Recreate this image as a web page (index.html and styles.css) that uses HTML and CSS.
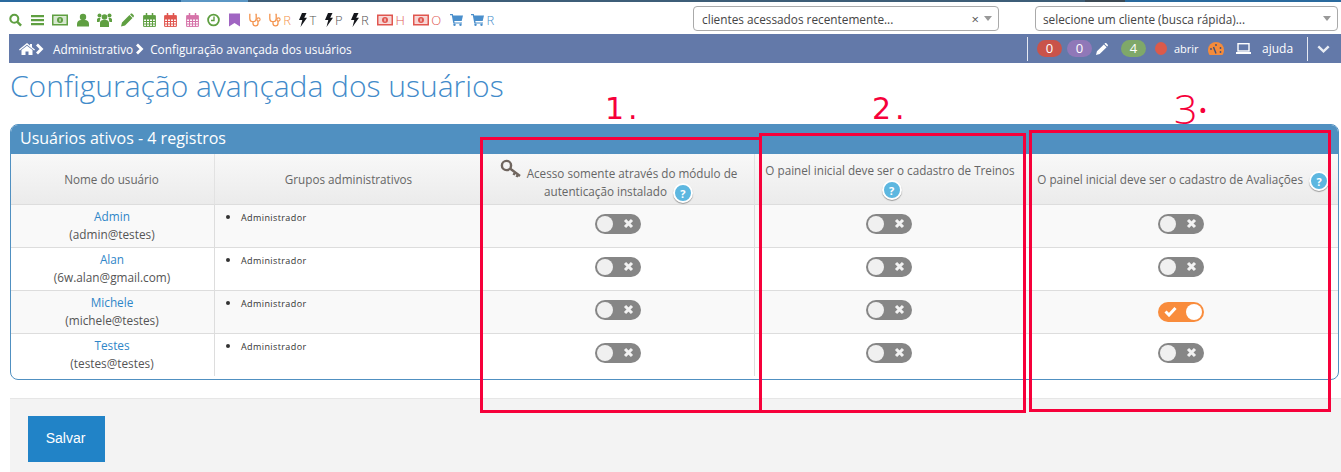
FILE: index.html
```html
<!DOCTYPE html>
<html lang="pt">
<head>
<meta charset="utf-8">
<title>Configuração avançada dos usuários</title>
<link rel="stylesheet" href="styles.css">
</head>
<body>
<svg class="defs" width="0" height="0" aria-hidden="true">
  <symbol id="i-search" viewBox="0 0 14 14"><circle cx="5.7" cy="5.7" r="4.3" fill="none" stroke="currentColor" stroke-width="2.2"/><path d="M9 9l4 4" stroke="currentColor" stroke-width="2.6"/></symbol>
  <symbol id="i-bars" viewBox="0 0 13 12"><path d="M0 1h13v2.200H0zM0 5h13v2.200H0zM0 9h13v2.200H0z" fill="currentColor"/></symbol>
  <symbol id="i-money" viewBox="0 0 16 11"><rect x=".8" y=".8" width="14.400" height="9.400" fill="none" stroke="currentColor" stroke-width="1.600"/><rect x="2" y="2" width="12" height="7" fill="currentColor" opacity=".25"/><circle cx="8" cy="5.500" r="3" fill="currentColor"/><path d="M8 4v3" stroke="#fff" stroke-width="1"/></symbol>
  <symbol id="i-user" viewBox="0 0 12 13"><circle cx="6" cy="3.500" r="3.200" fill="currentColor"/><path d="M0 13v-2.500C0 8 2 6.500 4 6.500h4c2 0 4 1.500 4 4V13z" fill="currentColor"/></symbol>
  <symbol id="i-users" viewBox="0 0 15 14"><circle cx="7.500" cy="4" r="2.800" fill="currentColor"/><circle cx="2.500" cy="2.500" r="2" fill="currentColor"/><circle cx="12.500" cy="2.500" r="2" fill="currentColor"/><path d="M3 14v-4c0-2 1.500-3 3-3h3c1.500 0 3 1 3 3v4z" fill="currentColor"/><path d="M0 9V6.500C0 5.500 1 5 2 5h1.500L2.500 9zM15 9V6.500C15 5.500 14 5 13 5h-1.500l1 4z" fill="currentColor"/></symbol>
  <symbol id="i-pencil" viewBox="0 0 13 13"><path d="M0 13l1-4 7.500-7.500 3 3L4 12zM9.500.5c.6-.6 1.400-.6 2 0l1 1c.6.600.6 1.400 0 2l-.4.400-3-3z" fill="currentColor"/></symbol>
  <symbol id="i-cal" viewBox="0 0 13 14"><path d="M.6 2.600h11.800v10.800H.6zM.6 6h11.800M.6 8.500h11.800M.6 11h11.800M3.500 6v7.400M6.500 6v7.400M9.500 6v7.400" fill="none" stroke="currentColor" stroke-width="1"/><rect x="1" y="3" width="11" height="3" fill="currentColor"/><path d="M3.500 0v3.500M9.500 0v3.500" stroke="currentColor" stroke-width="1.500"/></symbol>
  <symbol id="i-clock" viewBox="0 0 13 13"><circle cx="6.500" cy="6.500" r="5.400" fill="none" stroke="currentColor" stroke-width="1.800"/><path d="M7 3v4H4" fill="none" stroke="currentColor" stroke-width="1.400"/></symbol>
  <symbol id="i-bookmark" viewBox="0 0 11 13"><path d="M0 0h11v13L5.500 9.500 0 13z" fill="currentColor"/></symbol>
  <symbol id="i-steth" viewBox="0 0 12 13"><path d="M1.500 1H.8v4c0 2 1.500 3.200 3.200 3.200S7.200 7 7.200 5V1h-.8M4 8.200V10c0 1.500 1 2.300 2.500 2.300S9 11.500 9 10V7.500" fill="none" stroke="currentColor" stroke-width="1.300"/><circle cx="9.500" cy="6" r="1.600" fill="none" stroke="currentColor" stroke-width="1.100"/></symbol>
  <symbol id="i-bolt" viewBox="0 0 8 14"><path d="M3 0h4.500L5.200 4.800H8L1.500 14l1.800-7H0z" fill="currentColor"/></symbol>
  <symbol id="i-cart" viewBox="0 0 13 12"><path d="M0 0h2.800l.4 1.500H13l-1.300 5.500H4.300l.3 1.400h7.400v1.200H3.300L1.800 1.300H0z" fill="currentColor"/><circle cx="4.500" cy="10.800" r="1.200" fill="currentColor"/><circle cx="10.500" cy="10.800" r="1.200" fill="currentColor"/></symbol>
  <symbol id="i-home" viewBox="0 0 16 12"><path d="M8 0l3 2.500V1h2v3.200L16 6.500l-.8.900L8 1.700.8 7.400 0 6.500z" fill="currentColor"/><path d="M2.500 7L8 2.800 13.500 7v5H9.500V8.500h-3V12h-4z" fill="currentColor"/></symbol>
  <symbol id="i-chev" viewBox="0 0 8 12"><path d="M1 1.500l4.500 4.500L1 10.500" fill="none" stroke="currentColor" stroke-width="2.800"/></symbol>
  <symbol id="i-down" viewBox="0 0 13 8"><path d="M1.300 1.300l5.200 5 5.200-5" fill="none" stroke="currentColor" stroke-width="2.400"/></symbol>
  <symbol id="i-laptop" viewBox="0 0 15 11"><rect x="2" y=".7" width="11" height="7.300" fill="none" stroke="currentColor" stroke-width="1.400"/><rect x="0" y="9" width="15" height="2" fill="currentColor"/></symbol>
  <symbol id="i-gauge" viewBox="0 0 16 13"><path d="M8 0a8 8 0 0 1 8 8c0 2-.6 3.600-1.600 5H1.600C.6 11.600 0 10 0 8a8 8 0 0 1 8-8z" fill="#f58b3a"/><path d="M8 11.500L5.500 5" stroke="#40507a" stroke-width="1.400"/><circle cx="3" cy="7" r=".9" fill="#40507a"/><circle cx="8" cy="3" r=".9" fill="#40507a"/><circle cx="12.500" cy="6" r=".9" fill="#40507a"/><circle cx="12.500" cy="10" r=".9" fill="#40507a"/></symbol>
  <symbol id="i-key" viewBox="0 0 22 20"><circle cx="6.500" cy="6.500" r="4.600" fill="none" stroke="currentColor" stroke-width="2.400"/><path d="M10 9.500l10 7.500M15 13.500l-1.500 2.500M18 15.500l-1.500 2.500" fill="none" stroke="currentColor" stroke-width="2.400"/></symbol>
  <symbol id="i-x" viewBox="0 0 12 12"><path d="M2.200 2.200l7.600 7.600M9.800 2.200l-7.600 7.600" stroke="currentColor" stroke-width="3.400"/></symbol>
  <symbol id="i-check" viewBox="0 0 13 11"><path d="M1.500 5.500l3.500 3.500 6.500-7" fill="none" stroke="currentColor" stroke-width="3"/></symbol>
</svg>

<div class="topline"><span class="seg seg-a"></span><span class="seg seg-b"></span><span class="seg seg-c"></span><span class="seg seg-d"></span></div>

<header class="toolbar">
  <nav class="quick">
    <svg class="ic w13 green"><use href="#i-search"/></svg>
    <svg class="ic w13 green"><use href="#i-bars"/></svg>
    <svg class="ic w16 green"><use href="#i-money"/></svg>
    <svg class="ic w12 green"><use href="#i-user"/></svg>
    <svg class="ic w15 green"><use href="#i-users"/></svg>
    <svg class="ic w13 green"><use href="#i-pencil"/></svg>
    <svg class="ic w13 green"><use href="#i-cal"/></svg>
    <svg class="ic w13 red"><use href="#i-cal"/></svg>
    <svg class="ic w13 pink"><use href="#i-cal"/></svg>
    <svg class="ic w13 green"><use href="#i-clock"/></svg>
    <svg class="ic w11 purple"><use href="#i-bookmark"/></svg>
    <svg class="ic w12 orange"><use href="#i-steth"/></svg>
    <span class="qi orange"><svg class="ic w12"><use href="#i-steth"/></svg>R</span>
    <span class="qi grey"><svg class="ic w8 black"><use href="#i-bolt"/></svg>T</span>
    <span class="qi grey"><svg class="ic w8 black"><use href="#i-bolt"/></svg>P</span>
    <span class="qi grey"><svg class="ic w8 black"><use href="#i-bolt"/></svg>R</span>
    <span class="qi red"><svg class="ic w16"><use href="#i-money"/></svg>H</span>
    <span class="qi red"><svg class="ic w16"><use href="#i-money"/></svg>O</span>
    <svg class="ic w13 blue"><use href="#i-cart"/></svg>
    <span class="qi blue"><svg class="ic w13"><use href="#i-cart"/></svg>R</span>
  </nav>
  <div class="selects">
    <div class="sel sel-a"><span class="sel-text">clientes acessados recentemente...</span><span class="sel-x">×</span><span class="caret"></span></div>
    <div class="sel sel-b"><span class="sel-text">selecione um cliente (busca rápida)...</span><span class="caret"></span></div>
  </div>
</header>

<div class="crumbbar">
  <div class="crumbs">
    <svg class="home"><use href="#i-home"/></svg>
    <svg class="chev"><use href="#i-chev"/></svg>
    <span class="crumb crumb-first">Administrativo</span>
    <svg class="chev"><use href="#i-chev"/></svg>
    <span class="crumb">Configuração avançada dos usuários</span>
  </div>
  <div class="status">
    <span class="vbar"></span>
    <span class="badge b-red">0</span>
    <span class="badge b-purple">0</span>
    <svg class="st-pencil"><use href="#i-pencil"/></svg>
    <span class="badge b-green">4</span>
    <span class="dot"></span>
    <span class="st-text st-abrir">abrir</span>
    <svg class="st-gauge"><use href="#i-gauge"/></svg>
    <svg class="st-laptop"><use href="#i-laptop"/></svg>
    <span class="st-text st-ajuda">ajuda</span>
    <span class="vbar vbar-b"></span>
    <svg class="st-down"><use href="#i-down"/></svg>
  </div>
</div>

<main>
  <h1 class="title">Configuração avançada dos usuários</h1>
  <section class="panel">
    <h2 class="panel-head">Usuários ativos - 4 registros</h2>
    <div class="panel-body">
      <table class="grid">
        <colgroup><col class="c1"><col class="c2"><col class="c3"><col class="c4"><col class="c5"></colgroup>
        <thead>
          <tr>
            <th class="th-name">Nome do usuário</th>
            <th>Grupos administrativos</th>
            <th class="th-key"><svg class="key"><use href="#i-key"/></svg>Acesso somente através do módulo de autenticação instalado <span class="help">?</span></th>
            <th class="th-two">O painel inicial deve ser o cadastro de Treinos <span class="help">?</span></th>
            <th class="th-three">O painel inicial deve ser o cadastro de Avaliações <span class="help">?</span></th>
          </tr>
        </thead>
        <tbody>
          <tr>
            <td class="who"><a href="#">Admin</a><br>(admin@testes)</td>
            <td class="grp"><ul><li>Administrador</li></ul></td>
            <td class="sw"><span class="toggle"><span class="knob"></span><svg class="tx"><use href="#i-x"/></svg></span></td>
            <td class="sw"><span class="toggle"><span class="knob"></span><svg class="tx"><use href="#i-x"/></svg></span></td>
            <td class="sw"><span class="toggle"><span class="knob"></span><svg class="tx"><use href="#i-x"/></svg></span></td>
          </tr>
          <tr>
            <td class="who"><a href="#">Alan</a><br>(6w.alan@gmail.com)</td>
            <td class="grp"><ul><li>Administrador</li></ul></td>
            <td class="sw"><span class="toggle"><span class="knob"></span><svg class="tx"><use href="#i-x"/></svg></span></td>
            <td class="sw"><span class="toggle"><span class="knob"></span><svg class="tx"><use href="#i-x"/></svg></span></td>
            <td class="sw"><span class="toggle"><span class="knob"></span><svg class="tx"><use href="#i-x"/></svg></span></td>
          </tr>
          <tr>
            <td class="who"><a href="#">Michele</a><br>(michele@testes)</td>
            <td class="grp"><ul><li>Administrador</li></ul></td>
            <td class="sw"><span class="toggle"><span class="knob"></span><svg class="tx"><use href="#i-x"/></svg></span></td>
            <td class="sw"><span class="toggle"><span class="knob"></span><svg class="tx"><use href="#i-x"/></svg></span></td>
            <td class="sw"><span class="toggle on"><svg class="tc"><use href="#i-check"/></svg><span class="knob"></span></span></td>
          </tr>
          <tr>
            <td class="who"><a href="#">Testes</a><br>(testes@testes)</td>
            <td class="grp"><ul><li>Administrador</li></ul></td>
            <td class="sw"><span class="toggle"><span class="knob"></span><svg class="tx"><use href="#i-x"/></svg></span></td>
            <td class="sw"><span class="toggle"><span class="knob"></span><svg class="tx"><use href="#i-x"/></svg></span></td>
            <td class="sw"><span class="toggle"><span class="knob"></span><svg class="tx"><use href="#i-x"/></svg></span></td>
          </tr>
        </tbody>
      </table>
    </div>
  </section>
  <footer class="actions"><button class="save" type="button">Salvar</button></footer>
</main>

<div class="mark box1"></div>
<div class="mark box2"></div>
<div class="mark box3"></div>
<span class="num num1">1.</span>
<span class="num num2">2.</span>
<span class="num num3">3<span class="num-dot">·</span></span>
</body>
</html>
```
FILE: styles.css
```css
* { box-sizing: border-box; }
html, body { margin: 0; padding: 0; }
body { width: 1341px; height: 472px; overflow: hidden; position: relative; background: #fff; font-family: "Open Sans", sans-serif; color: #555; }
.defs { position: absolute; }

.topline { display: flex; height: 2px; background: #2a6a9e; }
.seg { display: block; height: 2px; }
.seg-a { width: 181px; }
.seg-b { width: 67px; background: #5a96c4; }
.seg-c { width: 837px; background: #3e5e78; }
.seg-d { width: 40px; background: #3c4a55; }

.toolbar { height: 32px; display: flex; justify-content: space-between; }
.quick { display: flex; align-items: center; gap: 8.600px; padding: 3px 0 0 9px; height: 32px; }
.ic { display: block; height: 14px; flex: none; }
.w8 { width: 8px; } .w11 { width: 11px; } .w12 { width: 12px; } .w13 { width: 13px; } .w15 { width: 15px; } .w16 { width: 16px; }
.qi { display: flex; align-items: center; gap: 2px; font-size: 13px; line-height: 14px; font-weight: 300; }
.green { color: #5f9f41; } .red { color: #e0564f; } .pink { color: #d673a9; } .purple { color: #a065c2; }
.orange { color: #f49550; } .blue { color: #4a8fcc; } .black { color: #15171c; } .grey { color: #555; }

.selects { display: flex; gap: 36px; padding: 4px 3px 0 0; }
.sel { height: 25px; border: 1px solid #aaa; border-radius: 4px; background: #fff; display: flex; align-items: center; padding: 0 5px 0 8px; font-size: 11.800px; color: #444; }
.sel-a { width: 306px; }
.sel-b { width: 303px; padding-left: 7px; }
.sel-text { flex: 1; }
.sel-x { font-size: 13px; margin-right: 5px; color: #555; }
.caret { width: 0; height: 0; border: 4px solid transparent; border-top: 5px solid #999; border-bottom: 0; margin-right: 1px; }

.crumbbar { margin-left: 9px; height: 29px; background: #6379a9; color: #fff; display: flex; justify-content: space-between; align-items: center; }
.crumbs { display: flex; align-items: center; padding-left: 10px; font-size: 11.800px; }
.home { width: 16px; height: 12px; color: #fff; }
.chev { width: 8px; height: 12px; color: #fff; margin-left: 1px; }
.crumb { white-space: nowrap; margin-left: 6px; }
.crumb-first { margin-left: 9px; margin-right: 2px; }
.status { display: flex; align-items: center; width: 314px; height: 29px; font-size: 11px; }
.vbar { width: 1px; height: 24px; background: #e6e9f2; margin-right: 9px; flex: none; }
.vbar-b { margin: 0 9px 0 13px; }
.badge { width: 25px; height: 17px; border-radius: 9px; text-align: center; font-size: 13px; line-height: 17px; flex: none; }
.b-red { background: #c9534a; }
.b-purple { background: #9078b8; margin-left: 5px; }
.b-green { background: #7fa869; margin-left: 13px; }
.st-pencil { width: 12px; height: 12px; margin-left: 4px; color: #fff; }
.dot { width: 12px; height: 13px; border-radius: 50%; background: #dc5a4a; margin-left: 9px; flex: none; }
.st-text { white-space: nowrap; }
.st-abrir { margin-left: 7px; width: 24px; }
.st-gauge { width: 16px; height: 13px; margin-left: 10px; }
.st-laptop { width: 15px; height: 11px; margin-left: 12px; color: #fff; }
.st-ajuda { margin-left: 11px; width: 32px; font-size: 12px; }
.st-down { width: 13px; height: 8px; color: #e8ecf4; }

.title { margin: 0; padding: 6px 0 0 10px; height: 61px; font-size: 30px; line-height: 34px; font-weight: 300; color: #428bca; white-space: nowrap; }

.panel { margin: 0 2px 0 10px; border: 1px solid #5090c1; border-radius: 8px; height: 256px; overflow: hidden; }
.panel-head { margin: -1px -1px 0; height: 30px; padding: 0 10px; background: #5090c1; color: #fff; font-size: 16px; font-weight: 400; line-height: 29px; }
.grid { width: 1327px; table-layout: fixed; border-collapse: separate; border-spacing: 0; }
.c1 { width: 204px; } .c2 { width: 268px; } .c3 { width: 272px; } .c4 { width: 271px; } .c5 { width: 312px; }
th { height: 51px; padding: 0 5px; font-size: 11.700px; line-height: 18px; font-weight: 400; color: #666; text-align: center; background: linear-gradient(#f8f8f8, #ebebeb); border-bottom: 1px solid #ddd; border-right: 1px solid #e2e2e2; }
th:last-child, td:last-child { border-right: 0; }
td { height: 43px; border-bottom: 1px solid #ddd; border-right: 1px solid #ddd; vertical-align: top; }
tbody tr:nth-child(odd) td { background: #f9f9f9; }
tbody tr:last-child td { border-bottom: 0; height: 42px; }
.who { text-align: center; font-size: 11.800px; line-height: 18px; padding: 2px 1px 0 0; color: #555; }
.who a { color: #2f86c8; text-decoration: none; }
.grp { font-size: 9px; letter-spacing: .4px; color: #333; padding: 0; }
.grp ul { margin: 3px 0 0; padding-left: 26px; }
.grp li::marker { font-size: 12px; }
.sw { text-align: center; padding: 9px 2px 0 0; }
.th-name { padding: 0 7px 0 5px; }
.th-key { padding: 0 8px 4px; vertical-align: bottom; }
.th-two { padding: 0 5px; }
.th-three { padding: 0 9px 0 0; text-align: right; white-space: nowrap; }
.key { width: 22px; height: 20px; margin: -6px 5px 0 0; color: #70665f; vertical-align: -1px; }
.help { display: inline-block; width: 20px; height: 20px; margin: -4px 0 -4px 3px; border-radius: 50%; background: #5db7e0; color: #fff; font-weight: 700; font-size: 11px; line-height: 17px; border: 2px solid #fff; box-shadow: 0 1px 1px #999; text-align: center; vertical-align: middle; }
.toggle { display: inline-flex; align-items: center; justify-content: space-between; width: 46px; height: 20px; border-radius: 10px; background: #868686; padding: 0 6px 0 2px; }
.toggle.on { background: #f98c3c; padding: 0 2px 0 6px; }
.knob { width: 16px; height: 16px; border-radius: 50%; background: #f0f0f0; }
.on .knob { background: #fff; }
.tx { width: 11px; height: 11px; color: #f2f2f2; margin-right: 1px; margin-top: -1px; }
.tc { width: 13px; height: 11px; color: #fff; margin-top: -1px; }

.actions { margin: 18px 0 0 10px; height: 74px; background: #f3f3f3; border-top: 1px solid #e6e6e6; padding: 17px 0 0 18px; }
.save { width: 77px; height: 46px; border: 0; background: #2183c7; color: #fff; font-family: "Liberation Sans", sans-serif; font-size: 14px; padding: 0 2px 2px 0; }

.mark { position: absolute; border: 3px solid #f6003a; pointer-events: none; }
.box1 { left: 480px; top: 137px; width: 282px; height: 276px; }
.box2 { left: 759px; top: 133px; width: 267px; height: 280px; }
.box3 { left: 1029px; top: 130px; width: 302px; height: 282px; }
.num { position: absolute; color: #f6003a; line-height: 40px; white-space: nowrap; }
.num1 { left: 605px; top: 89px; font-family: "DejaVu Sans", sans-serif; font-size: 30px; letter-spacing: 4px; }
.num2 { left: 872px; top: 89px; font-family: "DejaVu Sans", sans-serif; font-size: 30px; letter-spacing: 4px; }
.num3 { left: 1174px; top: 88px; font-family: "Open Sans", sans-serif; font-weight: 300; font-size: 41px; }
.num-dot { font-weight: 400; }
```
